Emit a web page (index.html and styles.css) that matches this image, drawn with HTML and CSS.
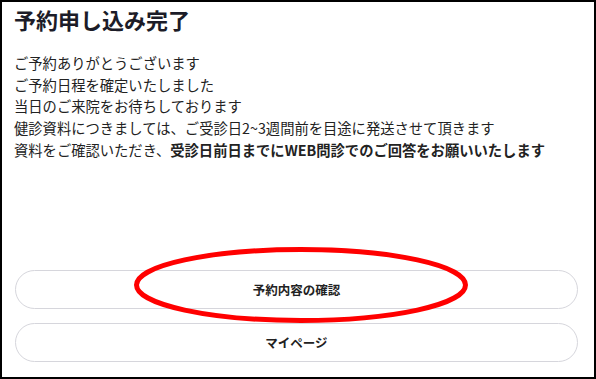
FILE: index.html
```html
<!DOCTYPE html>
<html lang="ja">
<head>
    <meta charset="UTF-8">
    <meta name="viewport" content="width=device-width, initial-scale=1.0">
    <title>予約申し込み完了</title>
    <link rel="stylesheet" href="styles.css">
</head>
<body>
    <div class="complete-container">
        <h1 class="complete-title">予約申し込み完了</h1>
        <p class="complete-message">
            ご予約ありがとうございます<br>
            ご予約日程を確定いたしました<br>
            当日のご来院をお待ちしております<br>
            健診資料につきましては、ご受診日2~3週間前を目途に発送させて頂きます<br>
            資料をご確認いただき、<strong>受診日前日までにWEB問診でのご回答をお願いいたします</strong>
        </p>
        <div class="complete-actions">
            <button class="action-button">予約内容の確認</button>
            <button class="action-button">マイページ</button>
        </div>
        <!-- annotation mark -->
        <svg class="highlight-mark" width="596" height="379" viewBox="0 0 596 379">
            <ellipse cx="301" cy="285" rx="164.5" ry="35.5" fill="none" stroke="#ff0000" stroke-width="5"/>
        </svg>
    </div>
</body>
</html>
```

FILE: styles.css
```css
html, body {
    margin: 0;
    padding: 0;
}
body {
    font-family: 'Noto Sans CJK JP', 'Noto Sans', sans-serif;
    color: #222;
    background: #fff;
}
.complete-container {
    position: relative;
    box-sizing: border-box;
    height: 100vh;
    border: 2px solid #000;
    padding: 0 16px 15px 12px;
    display: flex;
    flex-direction: column;
}
.complete-title {
    margin: 2px 0 0;
    font-size: 22px;
    line-height: 30px;
    font-weight: bold;
    color: #1c1c28;
}
.complete-message {
    margin: 18px 0 0;
    font-size: 14.3px;
    line-height: 21.7px;
}
.complete-message strong {
    font-weight: bold;
}
.complete-actions {
    margin-top: auto;
    display: flex;
    flex-direction: column;
    gap: 14px;
    padding-left: 1px;
}
.action-button {
    height: 39px;
    border: 1px solid #d6d6dc;
    border-radius: 20px;
    background: #fff;
    font-family: inherit;
    font-size: 12.5px;
    font-weight: bold;
    color: #222;
    cursor: pointer;
}
.highlight-mark {
    position: absolute;
    top: -2px;
    left: -2px;
    pointer-events: none;
}
```
